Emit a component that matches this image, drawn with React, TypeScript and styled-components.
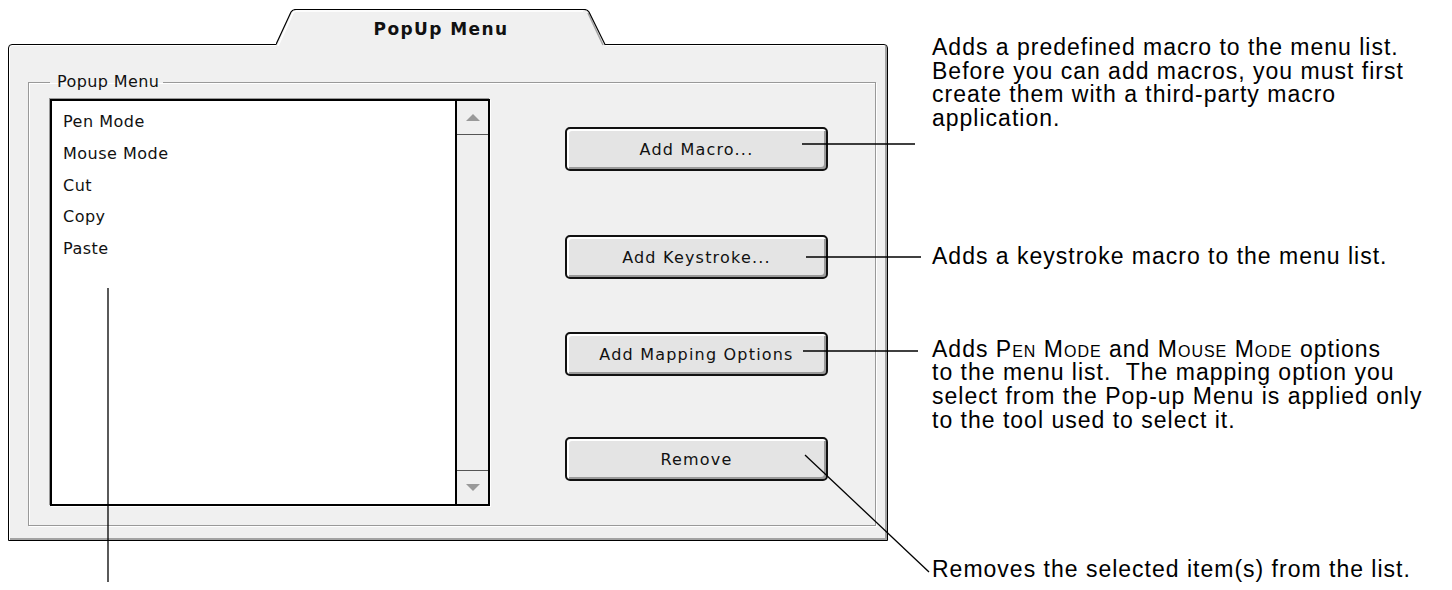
import React from "react";
import styled, { createGlobalStyle } from "styled-components";

const GlobalStyle = createGlobalStyle`
    html, body {
        margin: 0;
        padding: 0;
        background: #fff;
        overflow: hidden;
    }
`;

const Page = styled.div`
    position: relative;
    display: flex;
    width: 1452px;
    height: 590px;
    background: #fff;
    overflow: hidden;
`;

const Window = styled.div`
    display: flex;
    flex-direction: column;
    width: 880px;
    margin: 9px 0 0 8px;
`;

const TabRow = styled.div`
    position: relative;
    z-index: 1;
    display: flex;
    padding-left: 268px;
    margin-bottom: -2px;
`;

const Tab = styled.div`
    position: relative;
    display: flex;
    justify-content: center;
    box-sizing: border-box;
    width: 330px;
    height: 37px;
    padding-top: 10px;
`;

const TabShape = styled.svg`
    position: absolute;
    left: 0;
    top: 0;
`;

const TabTitle = styled.span`
    position: relative;
    font-family: "DejaVu Sans", sans-serif;
    font-weight: bold;
    font-size: 17px;
    line-height: 20px;
    letter-spacing: 1.4px;
    color: #111;
`;

const Panel = styled.div`
    display: flex;
    flex-direction: column;
    box-sizing: border-box;
    height: 497px;
    border: 1px solid #000;
    border-radius: 4px 4px 0 0;
    background: #f0f0f0;
    box-shadow: inset 1px 1px 0 #fff, inset -2px -2px 0 #a3a3a3;
    padding: 28px 11px 14px 19px;
`;

const Group = styled.fieldset`
    flex: 1;
    margin: 0;
    min-width: 0;
    padding: 8px 0 0 21px;
    border: 1px solid #999;
    box-shadow: inset 1px 1px 0 #fff, 1px 1px 0 #fff;
`;

const GroupLabel = styled.legend`
    padding: 0 4px 0 7px;
    font-family: "DejaVu Sans", sans-serif;
    font-size: 16px;
    line-height: 18px;
    letter-spacing: 0.4px;
    color: #111;
`;

const GroupBody = styled.div`
    display: flex;
    align-items: flex-start;
`;

const ListBox = styled.div`
    display: flex;
    box-sizing: border-box;
    width: 440px;
    height: 407px;
    border: 2px solid #000;
    background: #fff;
    box-shadow: -1px -1px 0 #999, 1px 1px 0 #fff;
`;

const Items = styled.ul`
    flex: 1;
    margin: 0;
    padding: 5px 0 0 11px;
    list-style: none;
`;

const Item = styled.li`
    font-family: "DejaVu Sans", sans-serif;
    font-size: 16px;
    line-height: 31.8px;
    letter-spacing: 0.5px;
    color: #111;
`;

const ScrollBar = styled.div`
    display: flex;
    flex-direction: column;
    width: 31px;
    border-left: 2px solid #000;
    background: #efefef;
`;

const ArrowBox = styled.div<{ $down?: boolean }>`
    display: flex;
    align-items: center;
    justify-content: center;
    height: 33px;
    ${(p) => (p.$down ? "border-top: 1px solid #555;" : "border-bottom: 1px solid #555;")}
`;

const Track = styled.div`
    flex: 1;
`;

const Buttons = styled.div`
    display: flex;
    flex-direction: column;
    margin-left: 75px;
`;

const MacButton = styled.button<{ $top: number }>`
    box-sizing: border-box;
    width: 263px;
    height: 44px;
    margin-top: ${(p) => p.$top}px;
    border: 2px solid #111;
    border-radius: 5px;
    background: #e4e4e4;
    box-shadow: inset 2px 2px 0 #fff, inset -2px -2px 0 #9a9a9a;
    font-family: "DejaVu Sans", sans-serif;
    font-size: 16px;
    letter-spacing: 1.2px;
    color: #111;
    padding: 0;
`;

const Notes = styled.div`
    display: flex;
    flex-direction: column;
    margin-left: 44px;
`;

const Note = styled.p<{ $top: number }>`
    margin: ${(p) => p.$top}px 0 0 0;
    font-family: "Liberation Sans", Arial, sans-serif;
    font-size: 23px;
    line-height: 23.7px;
    letter-spacing: 1px;
    white-space: nowrap;
    color: #000;
`;

const Caps = styled.span`
    font-variant: small-caps;
`;

const Leaders = styled.svg`
    position: absolute;
    left: 0;
    top: 0;
    pointer-events: none;
`;

const Arrow = ({ down }: { down?: boolean }) => (
    <svg width="16" height="8" viewBox="0 0 16 8">
        <polygon points={down ? "1,0 15,0 8,7" : "8,0 15,7 1,7"} fill="#999" />
    </svg>
);

const items = ["Pen Mode", "Mouse Mode", "Cut", "Copy", "Paste"];

const buttons = [
    { label: "Add Macro...", top: 28 },
    { label: "Add Keystroke...", top: 64 },
    { label: "Add Mapping Options", top: 53 },
    { label: "Remove", top: 61 },
];

const App = () => {
    return (
        <Page>
            <GlobalStyle />
            <Window>
                <TabRow>
                    <Tab>
                        <TabShape width="330" height="37" viewBox="0 0 330 37">
                            <path d="M0,37 L0,35.5 L15,3 Q16.5,0.5 20,0.5 L308,0.5 Q311.5,0.5 313,3 L329,35.5 L330,37 Z" fill="#f0f0f0" />
                            <path d="M2,37 L16.5,5 Q17.5,2 21,2 L307,2" fill="none" stroke="#fff" strokeWidth="1.5" />
                            <path d="M312,4 L327,36" fill="none" stroke="#a3a3a3" strokeWidth="1.5" />
                            <path d="M0,35.5 L15,3 Q16.5,0.5 20,0.5 L308,0.5 Q311.5,0.5 313,3 L329,35.5 L330,35.5" fill="none" stroke="#000" strokeWidth="1.2" />
                        </TabShape>
                        <TabTitle>PopUp Menu</TabTitle>
                    </Tab>
                </TabRow>
                <Panel>
                    <Group>
                        <GroupLabel>Popup Menu</GroupLabel>
                        <GroupBody>
                            <ListBox>
                                <Items>
                                    {items.map((it) => (
                                        <Item key={it}>{it}</Item>
                                    ))}
                                </Items>
                                <ScrollBar>
                                    <ArrowBox>
                                        <Arrow />
                                    </ArrowBox>
                                    <Track />
                                    <ArrowBox $down>
                                        <Arrow down />
                                    </ArrowBox>
                                </ScrollBar>
                            </ListBox>
                            <Buttons>
                                {buttons.map((b) => (
                                    <MacButton key={b.label} $top={b.top}>
                                        {b.label}
                                    </MacButton>
                                ))}
                            </Buttons>
                        </GroupBody>
                    </Group>
                </Panel>
            </Window>
            <Notes>
                <Note $top={36}>
                    Adds a predefined macro to the menu list.
                    <br />
                    Before you can add macros, you must first
                    <br />
                    create them with a third-party macro
                    <br />
                    application.
                </Note>
                <Note $top={114}>Adds a keystroke macro to the menu list.</Note>
                <Note $top={69}>
                    Adds <Caps>Pen Mode</Caps> and <Caps>Mouse Mode</Caps> options
                    <br />
                    to the menu list.&nbsp; The mapping option you
                    <br />
                    select from the Pop-up Menu is applied only
                    <br />
                    to the tool used to select it.
                </Note>
                <Note $top={126}>Removes the selected item(s) from the list.</Note>
            </Notes>
            <Leaders width="1452" height="590" viewBox="0 0 1452 590">
                <g stroke="#000" strokeWidth="1.3" fill="none">
                    <line x1="802" y1="144" x2="915" y2="144" />
                    <line x1="806" y1="257" x2="921" y2="257" />
                    <line x1="803" y1="351" x2="918" y2="351" />
                    <line x1="805" y1="455" x2="929" y2="572" />
                    <line x1="108" y1="288" x2="108" y2="582" />
                </g>
            </Leaders>
        </Page>
    );
};

export default App;
